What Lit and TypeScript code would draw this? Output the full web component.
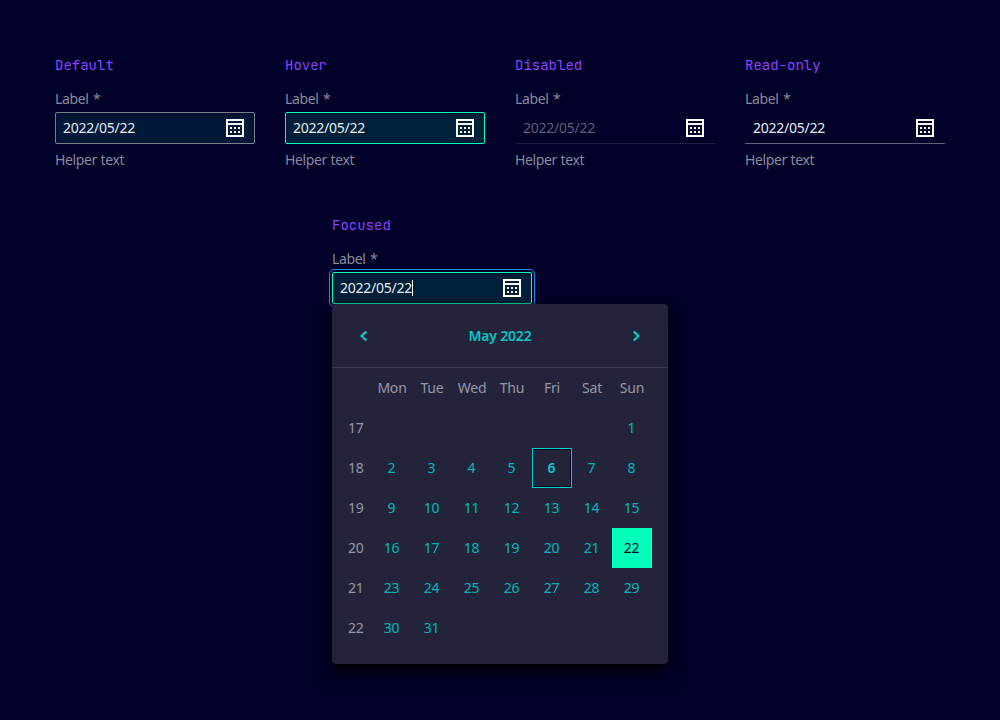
import { LitElement, html, css, svg, nothing } from "lit";
import { customElement, property } from "lit/decorators.js";
import { classMap } from "lit/directives/class-map.js";

const DAYS = ["Mon", "Tue", "Wed", "Thu", "Fri", "Sat", "Sun"];
const DOTS = [7, 11, 15].flatMap((x) => [11, 15].map((y) => [x, y]));

@customElement("date-field")
class DateField extends LitElement {
  @property() heading = "";
  @property() variant = "default";

  static styles = css`
    :host { display: block; width: 200px; color: #8a8a9a; font: 400 14px/20px "Noto Sans", sans-serif; }
    .heading { font: 14px/20px "JetBrains Mono", "DejaVu Sans Mono", monospace; color: #8f42ff; margin-bottom: 14px; }
    .label { margin-bottom: 3px; letter-spacing: -0.35px; word-spacing: 1.2px; }
    .helper { margin-top: 6px; letter-spacing: -0.4px; word-spacing: 0.6px; }
    .field { box-sizing: border-box; height: 32px; display: flex; align-items: center; justify-content: space-between; padding: 0 7px; border: 1px solid #7d8087; border-radius: 2px; background: #001839; color: #e6ebf0; box-shadow: inset 0 2px 4px rgba(0, 0, 40, 0.45); }
    .value { display: flex; align-items: center; letter-spacing: -0.25px; }
    .caret { width: 1px; height: 16px; background: #fff; }
    .hover, .focused { border-color: #00ffb9; background: #002039; }
    .focused { outline: 1px solid #1491eb; outline-offset: 2px; }
    .disabled, .read-only { padding: 0 8px; border: solid #1e1e41; border-width: 0 0 1px; border-radius: 0; background: none; box-shadow: none; }
    .disabled .value, .read-only .value, .disabled svg, .read-only svg { margin-top: 1px; }
    .read-only { border-bottom-color: #626277; }
    .disabled { color: #5e5e74; }
    svg { display: block; }
  `;

  render() {
    return html`
      <div class="heading">${this.heading}</div>
      <div class="label">Label *</div>
      <div class=${classMap({ field: true, [this.variant]: true })}>
        <span class="value">2022/05/22${this.variant === "focused" ? html`<i class="caret"></i>` : nothing}</span>
        <svg width="24" height="24" viewBox="0 0 24 24" shape-rendering="crispEdges">
          <path fill="#fff" fill-rule="evenodd" d="M3 3h18v18H3zM5 5v2h14V5zM5 9v10h14V9z" />
          ${DOTS.map(([x, y]) => svg`<rect x=${x} y=${y} width="2" height="2" fill="#fff" />`)}
        </svg>
      </div>
      ${this.variant === "focused" ? nothing : html`<div class="helper">Helper text</div>`}
    `;
  }
}

@customElement("date-calendar")
class DateCalendar extends LitElement {
  static styles = css`
    :host { display: block; box-sizing: border-box; width: 336px; height: 360px; border-radius: 4px; background: #23233c; color: #9797a5; font: 400 14px/20px "Noto Sans", sans-serif; box-shadow: 0 0 2px rgba(0, 0, 0, 0.7), 0 4px 8px rgba(0, 0, 0, 0.7), 0 12px 18px rgba(0, 0, 0, 0.4); }
    .header { box-sizing: border-box; height: 64px; display: flex; align-items: center; justify-content: space-between; padding: 0 20px; border-bottom: 1px solid #3a3a50; color: #00c8c8; }
    .title { font-weight: 600; letter-spacing: -0.2px; }
    .grid { display: grid; grid-template-columns: 24px repeat(7, 40px); grid-auto-rows: 40px; padding: 0 16px; }
    .grid > * { box-sizing: border-box; display: flex; align-items: center; justify-content: center; letter-spacing: -0.2px; }
    .grid > .week { justify-content: flex-start; }
    .day { color: #00b8b8; padding-right: 1px; }
    .today { font-weight: 600; color: #00cccc; border: 1px solid #00cccc; box-shadow: inset 0 0 0 1px #000028; }
    .selected { background: #00ffb9; color: #000028; }
    svg { display: block; fill: none; stroke: currentColor; stroke-width: 2.4; margin-top: 1px; }
  `;

  private cell(n: number) {
    if (n < 1 || n > 31) return html`<span></span>`;
    return html`<span class=${classMap({ day: true, today: n === 6, selected: n === 22 })}>${n}</span>`;
  }

  render() {
    return html`
      <div class="header">
        <svg width="24" height="24" viewBox="0 0 24 24"><path d="M14.2 7.5L9.7 12l4.5 4.5" /></svg>
        <span class="title">May 2022</span>
        <svg width="24" height="24" viewBox="0 0 24 24"><path d="M9.8 7.5l4.5 4.5-4.5 4.5" /></svg>
      </div>
      <div class="grid">
        <span></span>${DAYS.map((d) => html`<span>${d}</span>`)}
        ${[17, 18, 19, 20, 21, 22].map(
          (week, row) => html`<span class="week">${week}</span>${DAYS.map((_, col) => this.cell(row * 7 + col - 5))}`
        )}
      </div>
    `;
  }
}

@customElement("app-root")
class AppRoot extends LitElement {
  static styles = css`
    :host { display: block; box-sizing: border-box; width: 1000px; height: 720px; padding: 55px; background: #000028; overflow: hidden; }
    .row { display: flex; gap: 30px; height: 160px; }
    .open { width: 336px; margin: 0 auto; }
    date-calendar { position: relative; }
  `;

  render() {
    return html`
      <div class="row">
        ${["Default", "Hover", "Disabled", "Read-only"].map(
          (name) => html`<date-field heading=${name} variant=${name.toLowerCase()}></date-field>`
        )}
      </div>
      <div class="open">
        <date-field heading="Focused" variant="focused"></date-field>
        <date-calendar></date-calendar>
      </div>
    `;
  }
}
